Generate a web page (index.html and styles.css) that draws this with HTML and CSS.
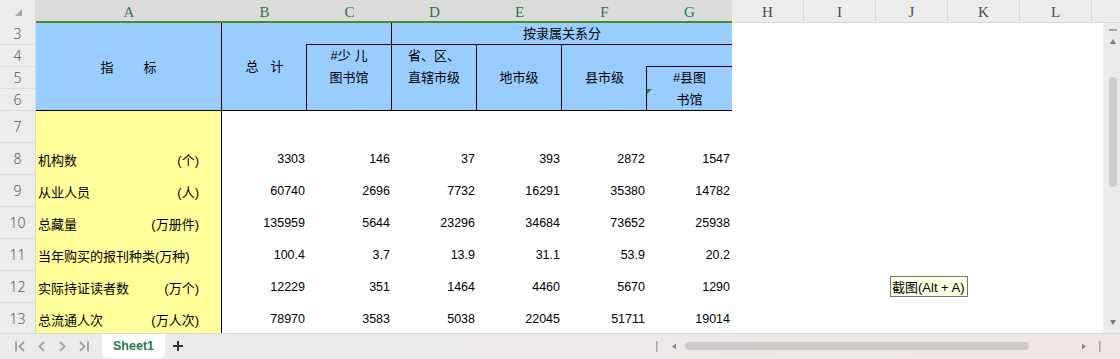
FILE: index.html
```html
<!DOCTYPE html>
<html lang="zh-CN">
<head>
<meta charset="utf-8">
<title>Sheet1</title>
<link rel="stylesheet" href="styles.css">
</head>
<body>
<div class="app">
  <div class="sheet">
    <div class="corner"><svg width="36" height="23" viewBox="0 0 36 23"><path d="M22 9 L22 16 L15 16 Z" fill="#a9a9a9"/></svg></div>
    <div class="ch sel">A</div>
    <div class="ch sel">B</div>
    <div class="ch sel">C</div>
    <div class="ch sel">D</div>
    <div class="ch sel">E</div>
    <div class="ch sel">F</div>
    <div class="ch sel">G</div>
    <div class="ch">H</div>
    <div class="ch">I</div>
    <div class="ch">J</div>
    <div class="ch">K</div>
    <div class="ch">L</div>
    <div class="ch m"></div>

    <div class="vscroll">
      <svg width="17" height="312" viewBox="0 0 17 312">
        <rect x="5" y="6" width="8" height="2" fill="#a8a8a8"/>
        <path d="M9 16 L12 21 L6 21 Z" fill="#7a7a7a"/>
        <rect x="5" y="54" width="8" height="110" rx="4" fill="#cdcdcd"/>
        <path d="M6 297 L12 297 L9 302 Z" fill="#7a7a7a"/>
      </svg>
    </div>

    <div class="rh">3</div>
    <div class="hd ah"><span>指</span><span>标</span></div>
    <div class="hd bh"><span>总</span><span>计</span></div>
    <div class="hd c3"></div>
    <div class="hd grp">按隶属关系分</div>

    <div class="rh">4</div>
    <div class="hd c4">#少 儿<br>图书馆</div>
    <div class="hd d4">省、区、<br>直辖市级</div>
    <div class="hd e4">地市级</div>
    <div class="hd f4">县市级</div>
    <div class="hd g4"></div>

    <div class="rh">5</div>
    <div class="hd g5">#县图</div>

    <div class="rh">6</div>
    <div class="hd g6">书馆</div>

    <div class="rh">7</div>
    <div class="lbl"></div>

    <div class="rh">8</div>
    <div class="lbl"><span>机构数</span><span>(个)</span></div>
    <div class="n">3303</div><div class="n">146</div><div class="n">37</div><div class="n">393</div><div class="n">2872</div><div class="n">1547</div>

    <div class="rh">9</div>
    <div class="lbl"><span>从业人员</span><span>(人)</span></div>
    <div class="n">60740</div><div class="n">2696</div><div class="n">7732</div><div class="n">16291</div><div class="n">35380</div><div class="n">14782</div>

    <div class="rh">10</div>
    <div class="lbl"><span>总藏量</span><span>(万册件)</span></div>
    <div class="n">135959</div><div class="n">5644</div><div class="n">23296</div><div class="n">34684</div><div class="n">73652</div><div class="n">25938</div>

    <div class="rh">11</div>
    <div class="lbl"><span>当年购买的报刊种类(万种)</span></div>
    <div class="n">100.4</div><div class="n">3.7</div><div class="n">13.9</div><div class="n">31.1</div><div class="n">53.9</div><div class="n">20.2</div>

    <div class="rh">12</div>
    <div class="lbl"><span>实际持证读者数</span><span>(万个)</span></div>
    <div class="n">12229</div><div class="n">351</div><div class="n">1464</div><div class="n">4460</div><div class="n">5670</div><div class="n">1290</div>

    <div class="rh">13</div>
    <div class="lbl"><span>总流通人次</span><span>(万人次)</span></div>
    <div class="n">78970</div><div class="n">3583</div><div class="n">5038</div><div class="n">22045</div><div class="n">51711</div><div class="n">19014</div>
  </div>

  <div class="bar">
    <svg class="nav" width="102" height="25" viewBox="0 0 102 25">
      <g fill="none" stroke="#a6a6a6" stroke-width="2">
        <path d="M16 7.5 V17.5"/>
        <path d="M24 8 L19.5 12.5 L24 17"/>
        <path d="M44 8 L39.5 12.5 L44 17"/>
        <path d="M60 8 L64.5 12.5 L60 17"/>
        <path d="M80 8 L84.5 12.5 L80 17"/>
        <path d="M88 7.5 V17.5"/>
      </g>
    </svg>
    <div class="tab">Sheet1</div>
    <svg class="plus" width="10" height="10" viewBox="0 0 10 10">
      <path d="M5 0 V10 M0 5 H10" stroke="#333" stroke-width="2"/>
    </svg>
    <svg class="hscroll" width="470" height="25" viewBox="0 0 470 25">
      <rect x="6" y="7" width="1.5" height="11" fill="#a8a8a8"/>
      <path d="M22 12.5 L26 9.5 L26 15.5 Z" fill="#8a8a8a"/>
      <rect x="35" y="8" width="344" height="8" rx="4" fill="#d0cbcb"/>
      <path d="M432 9.5 L436 12.5 L432 15.5 Z" fill="#8a8a8a"/>
      <rect x="449" y="7" width="1.5" height="11" fill="#a8a8a8"/>
    </svg>
  </div>

  <div class="tip">截图(Alt + A)</div>
</div>
</body>
</html>
```

FILE: styles.css
```css
* { box-sizing: border-box; }

html, body {
  margin: 0;
  padding: 0;
}

body {
  width: 1120px;
  height: 359px;
  overflow: hidden;
  font-family: "Liberation Sans", "Noto Sans CJK SC", sans-serif;
  color: #000;
  background: #fff;
}

.app {
  position: relative;
  display: flex;
  flex-direction: column;
  width: 1120px;
  height: 359px;
}

.sheet {
  display: grid;
  grid-template-columns: 36px 186px repeat(6, 85px) repeat(5, 72px) 1fr 17px;
  grid-template-rows: 23px repeat(4, 22px) repeat(7, 32px);
  height: 333px;
  overflow: hidden;
  background: #fff;
}

/* column headers */
.corner {
  background: #ececec;
  border-right: 1px solid #dadada;
}
.corner svg { display: block; }

.ch {
  display: flex;
  align-items: center;
  justify-content: center;
  padding-top: 2px;
  background: #ececec;
  border-right: 1px solid #d6d6d6;
  border-bottom: 1px solid #d6d6d6;
  font-family: "Liberation Serif", serif;
  font-size: 15px;
  color: #4a4a4a;
}
.ch.sel {
  background: #dbdbdb;
  color: #1f7a46;
  border-right: none;
  border-bottom: 2px solid #4a8d26;
  padding-top: 3px;
}
.ch.m {
  grid-column: span 2;
  border-right: none;
}

/* row headers */
.rh {
  grid-column: 1;
  display: flex;
  align-items: center;
  justify-content: center;
  background: #ececec;
  border-right: 1px solid #d8d8d8;
  border-bottom: 1px solid #dadada;
  font-family: "Noto Sans", "Liberation Sans", sans-serif;
  font-weight: 300;
  font-size: 14px;
  color: #5a5a5a;
}

/* vertical scrollbar */
.vscroll {
  grid-column: 15;
  grid-row: 2 / 13;
  background: #e9eaea;
  border-left: 1px solid #f2f2f2;
}
.vscroll svg { display: block; }

/* blue header block */
.hd {
  background: #99ccff;
  font-size: 13px;
  line-height: 22px;
  text-align: center;
  border-bottom: 1px solid #000;
}
.ah {
  grid-row: span 4;
  display: flex;
  align-items: center;
  justify-content: center;
  gap: 30px;
  border-right: 1px solid #000;
  padding-top: 2px;
}
.bh {
  grid-row: span 4;
  display: flex;
  align-items: center;
  justify-content: center;
  gap: 12px;
}
.c3 {
  margin-left: -1px;
  border-right: 1px solid #000;
}
.grp {
  grid-column: span 4;
  line-height: 21px;
}
.c4 {
  grid-row: span 3;
  margin-left: -1px;
  border-left: 1px solid #000;
  border-right: 1px solid #000;
}
.d4 {
  grid-row: span 3;
  border-right: 1px solid #000;
}
.e4 {
  grid-row: span 3;
  border-right: 1px solid #000;
  padding-top: 22px;
}
.f4 {
  grid-row: span 3;
  padding-top: 22px;
}
.g4 {
  margin-left: -1px;
}
.g5 {
  margin-left: -1px;
  border-left: 1px solid #000;
  border-bottom: none;
}
.g6 {
  position: relative;
  margin-left: -1px;
  border-left: 1px solid #000;
  line-height: 21px;
}
.g6::before {
  content: "";
  position: absolute;
  left: 0;
  top: 0;
  border-top: 5px solid #1d8a3a;
  border-right: 5px solid transparent;
}

/* body */
.lbl {
  display: flex;
  align-items: center;
  justify-content: space-between;
  padding: 0 22px 0 2px;
  background: #ffff99;
  border-right: 1px solid #000;
  font-size: 13px;
  white-space: nowrap;
}
.n {
  display: flex;
  align-items: center;
  justify-content: flex-end;
  padding-right: 2px;
  font-size: 12.5px;
}

/* bottom bar */
.bar {
  display: flex;
  align-items: flex-start;
  height: 26px;
  border-top: 1px solid #d8d8d8;
  background: linear-gradient(90deg, #ebebeb 0%, #ece9e8 50%, #efe6e4 100%);
}
.bar svg { display: block; flex: none; }
.tab {
  width: 63px;
  height: 24px;
  display: flex;
  align-items: center;
  justify-content: center;
  background: #fff;
  border-radius: 0 0 5px 5px;
  font-weight: bold;
  font-size: 12.5px;
  color: #1f7a4e;
}
.plus {
  margin: 7px 0 0 8px;
}
.hscroll {
  margin-left: auto;
}

/* tooltip */
.tip {
  position: absolute;
  left: 890px;
  top: 276px;
  width: 78px;
  height: 21px;
  display: flex;
  align-items: center;
  padding-left: 1px;
  background: #ffffe1;
  border: 1px solid #767676;
  font-size: 13px;
  white-space: nowrap;
}
```
